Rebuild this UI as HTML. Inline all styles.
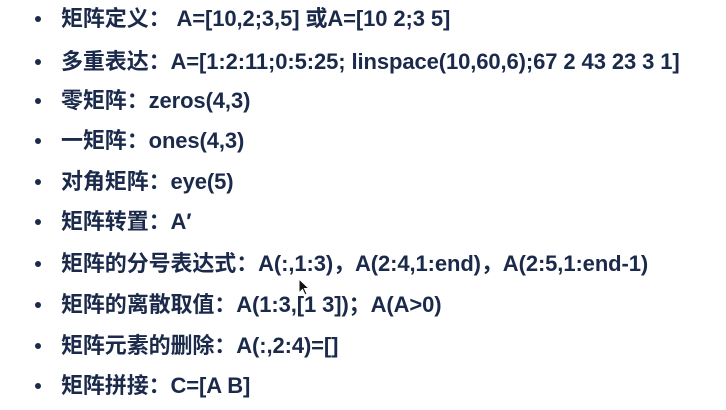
<!DOCTYPE html>
<html><head><meta charset="utf-8"><style>
html,body{margin:0;padding:0;background:#fff;}
body{width:726px;height:410px;position:relative;overflow:hidden;font-family:"Liberation Sans","Noto Sans CJK SC",sans-serif;color:#1b2a4b;}
.l{position:absolute;left:61px;font-size:22px;line-height:26px;white-space:nowrap;letter-spacing:-0.1px;font-weight:bold;}
.b{position:absolute;left:35px;width:6px;height:6px;border-radius:50%;background:#1b2a4b;}
</style></head><body>
<div class="b" style="top:16px"></div><div class="l" style="top:6px">矩阵定义： A=[10,2;3,5] 或A=[10 2;3 5]</div>
<div class="b" style="top:59px"></div><div class="l" style="top:49px">多重表达：A=[1:2:11;0:5:25; linspace(10,60,6);67 2 43 23 3 1]</div>
<div class="b" style="top:98px"></div><div class="l" style="top:88px">零矩阵：zeros(4,3)</div>
<div class="b" style="top:138px"></div><div class="l" style="top:128px">一矩阵：ones(4,3)</div>
<div class="b" style="top:179px"></div><div class="l" style="top:169px">对角矩阵：eye(5)</div>
<div class="b" style="top:219px"></div><div class="l" style="top:209px">矩阵转置：A′</div>
<div class="b" style="top:261px"></div><div class="l" style="top:251px">矩阵的分号表达式：A(:,1:3)，A(2:4,1:end)，A(2:5,1:end-1)</div>
<div class="b" style="top:302px"></div><div class="l" style="top:292px">矩阵的离散取值：A(1:3,[1 3])；A(A&gt;0)</div>
<div class="b" style="top:343px"></div><div class="l" style="top:333px">矩阵元素的删除：A(:,2:4)=[]</div>
<div class="b" style="top:383px"></div><div class="l" style="top:373px">矩阵拼接：C=[A B]</div>
<svg style="position:absolute;left:298px;top:278px" width="12" height="18" viewBox="0 0 12 18"><path d="M1 1 L1 15 L4.5 11.5 L7 17 L9 16 L6.5 10.5 L11 10.5 Z" fill="#111" stroke="#fff" stroke-width="1"/></svg>
</body></html>
